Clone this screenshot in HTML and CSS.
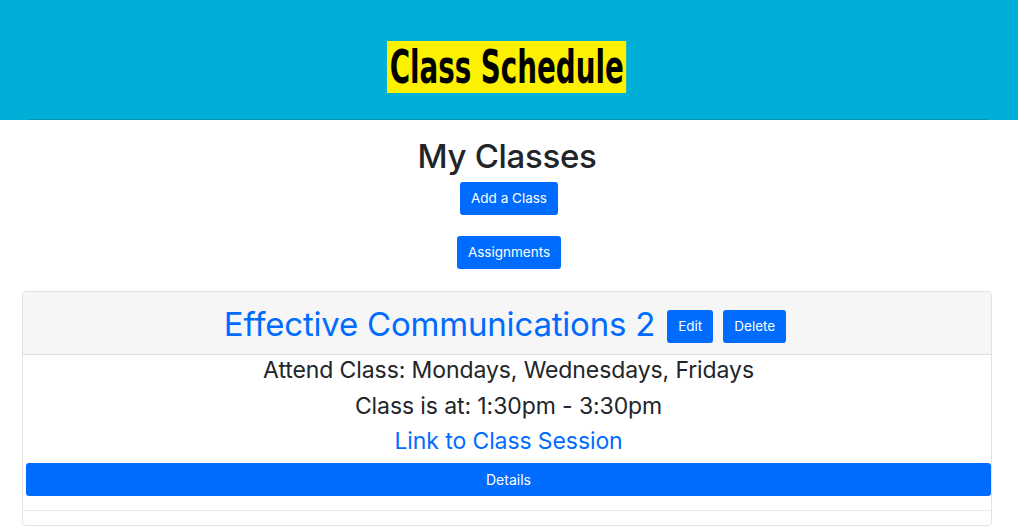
FILE: index.html
```html
<!DOCTYPE html>
<html>
<head>
<meta charset="utf-8">
<link rel="stylesheet" href="styles.css">
</head>
<body>
<header class="topbar">
  <div class="topbar-inner">
    <h1 class="brand">Class Schedule</h1>
  </div>
  <div class="topbar-rule"><div class="rule-line"></div></div>
</header>
<main class="main">
  <h2 class="page-title">My Classes</h2>
  <div class="actions">
    <a class="btn" href="#">Add a Class</a>
    <a class="btn" href="#">Assignments</a>
  </div>
  <section class="card">
    <div class="card-header">
      <h3 class="course-title">Effective Communications 2</h3>
      <a class="btn" href="#">Edit</a>
      <a class="btn" href="#">Delete</a>
    </div>
    <div class="card-body">
      <p class="info">Attend Class: Mondays, Wednesdays, Fridays</p>
      <p class="info">Class is at: 1:30pm - 3:30pm</p>
      <p class="info"><a class="session-link" href="#">Link to Class Session</a></p>
      <a class="btn btn-block" href="#">Details</a>
    </div>
    <div class="card-footer"></div>
  </section>
</main>
</body>
</html>
```
FILE: styles.css
```css
* { box-sizing: border-box; }
html, body { margin: 0; padding: 0; background: #fff; }
body {
  font-family: Inter, "Noto Sans", "Liberation Sans", sans-serif;
  color: #212529;
}
.topbar { background: #00afd8; }
.topbar-inner {
  height: 119px;
  padding-top: 15px;
  display: flex;
  align-items: center;
  justify-content: center;
}
.brand {
  margin: 0 0 0 -5px;
  background: #fbf100;
  color: #000;
  font-family: "DejaVu Sans", sans-serif;
  font-stretch: condensed;
  font-weight: 700;
  font-size: 46px;
  line-height: 52px;
  padding: 0 4px;
  transform: scaleX(0.67);
  white-space: nowrap;
}
.topbar-rule {
  height: 1px;
  padding: 0 31px 0 27px;
}
.rule-line { height: 1px; background: #0094ad; }
.main {
  padding: 17px 0 0;
  text-align: center;
}
.page-title {
  margin: 0 0 7px;
  font-size: 33px;
  font-weight: 500;
  line-height: 38px;
  letter-spacing: -0.3px;
  padding-right: 4px;
}
.actions {
  display: flex;
  flex-direction: column;
  align-items: center;
  gap: 21px;
  margin-bottom: 22px;
}
.btn {
  display: inline-block;
  background: #006cff;
  color: #fff;
  text-decoration: none;
  font-size: 13.5px;
  line-height: 21px;
  padding: 6px 11px;
  border-radius: 3px;
}
.card {
  margin: 0 26px 0 22px;
  border: 1px solid #e2e2e2;
  border-radius: 4px;
  overflow: hidden;
}
.card-header {
  background: #f6f6f6;
  border-bottom: 1px solid #dedede;
  height: 63px;
  display: flex;
  align-items: center;
  justify-content: center;
  gap: 10px;
  padding-top: 6px;
  padding-right: 4px;
}
.course-title {
  margin: -4px 2px 0 0;
  font-size: 33px;
  font-weight: 400;
  color: #006cff;
  letter-spacing: -0.2px;
}
.card-body {
  padding: 0 0 14px 3px;
}
.info {
  margin: 0;
  font-size: 23px;
  line-height: 35.5px;
  letter-spacing: -0.1px;
}
.info:first-child { margin-top: -2px; }
.session-link { color: #006cff; text-decoration: none; }
.btn-block {
  display: block;
  margin-top: 3px;
  line-height: 21px;
  font-size: 14px;
}
.card-footer {
  height: 15px;
  border-top: 1px solid #ececec;
}
```
